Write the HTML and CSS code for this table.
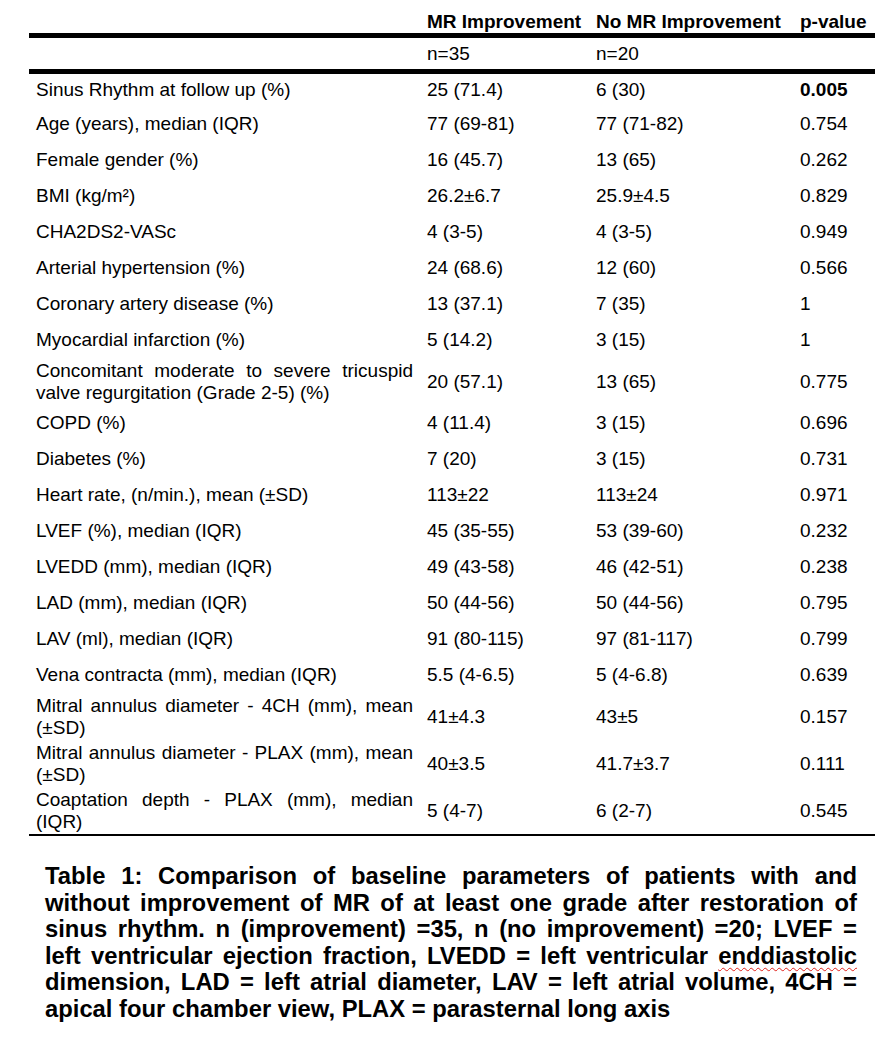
FILE: index.html
```html
<!DOCTYPE html>
<html lang="en">
<head>
<meta charset="utf-8">
<title>Table 1</title>
<link rel="stylesheet" href="styles.css">
</head>
<body>
<div class="page">
  <table class="data">
    <colgroup>
      <col class="c1"><col class="c2"><col class="c3"><col class="c4">
    </colgroup>
    <thead>
      <tr class="head">
        <th></th><th>MR Improvement</th><th>No MR Improvement</th><th>p-value</th>
      </tr>
      <tr class="nrow">
        <td></td><td>n=35</td><td>n=20</td><td></td>
      </tr>
    </thead>
    <tbody>
      <tr class="first"><td class="lbl">Sinus Rhythm at follow up (%)</td><td>25 (71.4)</td><td>6 (30)</td><td><b>0.005</b></td></tr>
      <tr><td class="lbl">Age (years), median (IQR)</td><td>77 (69-81)</td><td>77 (71-82)</td><td>0.754</td></tr>
      <tr><td class="lbl">Female gender (%)</td><td>16 (45.7)</td><td>13 (65)</td><td>0.262</td></tr>
      <tr><td class="lbl">BMI (kg/m²)</td><td>26.2±6.7</td><td>25.9±4.5</td><td>0.829</td></tr>
      <tr><td class="lbl">CHA2DS2-VASc</td><td>4 (3-5)</td><td>4 (3-5)</td><td>0.949</td></tr>
      <tr><td class="lbl">Arterial hypertension (%)</td><td>24 (68.6)</td><td>12 (60)</td><td>0.566</td></tr>
      <tr><td class="lbl">Coronary artery disease (%)</td><td>13 (37.1)</td><td>7 (35)</td><td>1</td></tr>
      <tr><td class="lbl">Myocardial infarction (%)</td><td>5 (14.2)</td><td>3 (15)</td><td>1</td></tr>
      <tr class="dbl"><td class="lbl">Concomitant moderate to severe tricuspid valve regurgitation (Grade 2-5) (%)</td><td>20 (57.1)</td><td>13 (65)</td><td>0.775</td></tr>
      <tr><td class="lbl">COPD (%)</td><td>4 (11.4)</td><td>3 (15)</td><td>0.696</td></tr>
      <tr><td class="lbl">Diabetes (%)</td><td>7 (20)</td><td>3 (15)</td><td>0.731</td></tr>
      <tr><td class="lbl">Heart rate, (n/min.), mean (±SD)</td><td>113±22</td><td>113±24</td><td>0.971</td></tr>
      <tr><td class="lbl">LVEF (%), median (IQR)</td><td>45 (35-55)</td><td>53 (39-60)</td><td>0.232</td></tr>
      <tr><td class="lbl">LVEDD (mm), median (IQR)</td><td>49 (43-58)</td><td>46 (42-51)</td><td>0.238</td></tr>
      <tr><td class="lbl">LAD (mm), median (IQR)</td><td>50 (44-56)</td><td>50 (44-56)</td><td>0.795</td></tr>
      <tr><td class="lbl">LAV (ml), median (IQR)</td><td>91 (80-115)</td><td>97 (81-117)</td><td>0.799</td></tr>
      <tr><td class="lbl">Vena contracta (mm), median (IQR)</td><td>5.5 (4-6.5)</td><td>5 (4-6.8)</td><td>0.639</td></tr>
      <tr class="dbl"><td class="lbl">Mitral annulus diameter - 4CH (mm), mean (±SD)</td><td>41±4.3</td><td>43±5</td><td>0.157</td></tr>
      <tr class="dbl"><td class="lbl">Mitral annulus diameter - PLAX (mm), mean (±SD)</td><td>40±3.5</td><td>41.7±3.7</td><td>0.111</td></tr>
      <tr class="dbl last"><td class="lbl">Coaptation depth - PLAX (mm), median (IQR)</td><td>5 (4-7)</td><td>6 (2-7)</td><td>0.545</td></tr>
    </tbody>
  </table>
  <p class="caption">Table 1: Comparison of baseline parameters of patients with and without improvement of MR of at least one grade after restoration of sinus rhythm. n (improvement) =35, n (no improvement) =20; LVEF = left ventricular ejection fraction, LVEDD = left ventricular <span class="spell">enddiastolic</span> dimension, LAD = left atrial diameter, LAV = left atrial volume, 4CH = apical four chamber view, PLAX = parasternal long axis</p>
</div>
</body>
</html>
```

FILE: styles.css
```css
html, body {
  margin: 0;
  padding: 0;
  background: #ffffff;
}

body {
  font-family: "Liberation Sans", Arial, sans-serif;
  color: #000000;
}

.page {
  padding-top: 8px;
}

.data {
  margin-left: 29px;
  width: 846px;
  border-collapse: separate;
  border-spacing: 0;
  table-layout: fixed;
  font-size: 19px;
  line-height: 22px;
}

.c1 { width: 391px; }
.c2 { width: 169px; }
.c3 { width: 204px; }
.c4 { width: 82px; }

.data th,
.data td {
  box-sizing: border-box;
  padding: 0 7px;
  text-align: left;
  vertical-align: middle;
}

.head th {
  height: 30px;
  vertical-align: bottom;
  font-weight: bold;
  white-space: nowrap;
  border-bottom: 5px solid #000000;
}

.nrow td {
  height: 36px;
  border-bottom: 5px solid #000000;
}

.data tbody td {
  height: 36px;
}

.data tbody tr.first td {
  height: 32px;
}

.data tbody tr.dbl td {
  height: 47px;
}

.data tbody tr.last td {
  height: 49px;
  border-bottom: 2px solid #000000;
}

.data td.lbl {
  text-align: justify;
  text-align-last: left;
}

.caption {
  margin: 27px 0 0 45px;
  width: 812px;
  font-size: 23.8px;
  line-height: 26.6px;
  font-weight: bold;
  text-align: justify;
}

.spell {
  display: inline-block;
  line-height: 24px;
  vertical-align: top;
  margin-top: 1px;
  text-decoration: underline wavy #e0201a;
  text-decoration-thickness: 1px;
  text-underline-offset: 3px;
}
```
